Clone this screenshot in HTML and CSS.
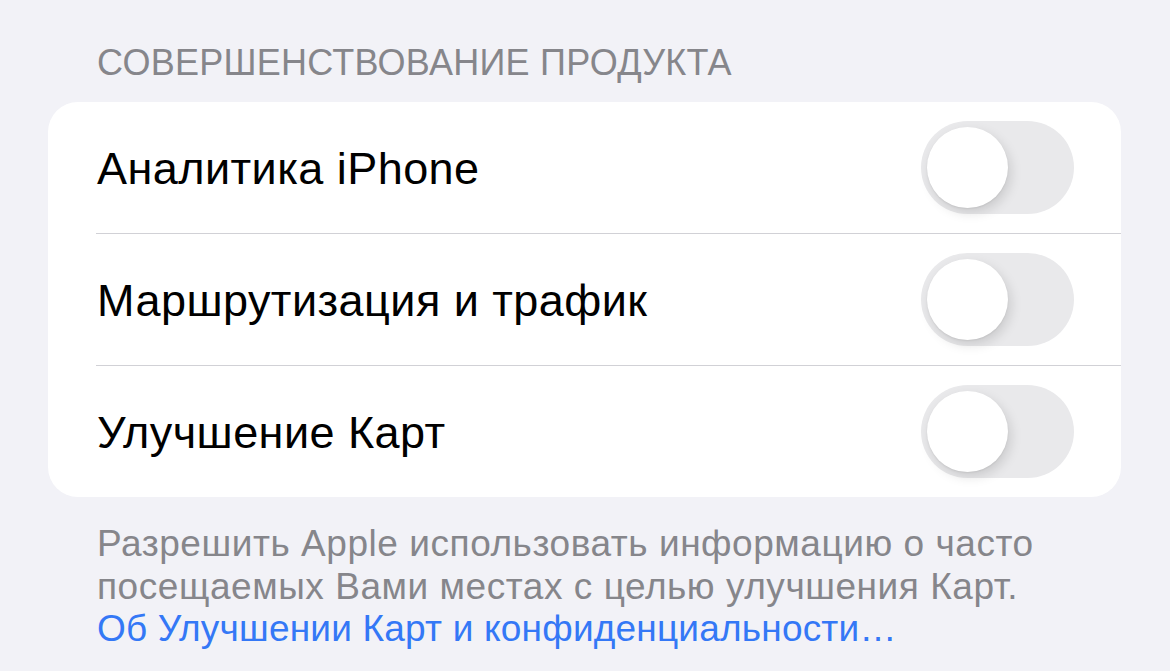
FILE: index.html
```html
<!DOCTYPE html>
<html lang="ru">
<head>
<meta charset="utf-8">
<title>Совершенствование продукта</title>
<link rel="stylesheet" href="styles.css">
</head>
<body>
  <section class="group">
    <h2 class="group-title">Совершенствование продукта</h2>
    <div class="card">
      <div class="row">
        <span class="row-label">Аналитика iPhone</span>
        <span class="switch" role="switch" aria-checked="false"><span class="knob"></span></span>
      </div>
      <div class="row">
        <span class="row-label">Маршрутизация и трафик</span>
        <span class="switch" role="switch" aria-checked="false"><span class="knob"></span></span>
      </div>
      <div class="row">
        <span class="row-label">Улучшение Карт</span>
        <span class="switch" role="switch" aria-checked="false"><span class="knob"></span></span>
      </div>
    </div>
    <p class="group-footer">
      Разрешить Apple использовать информацию о часто<br>
      посещаемых Вами местах с целью улучшения Карт.<br>
      <a class="footer-link" href="#">Об Улучшении Карт и конфиденциальности…</a>
    </p>
  </section>
</body>
</html>
```

FILE: styles.css
```css
html, body {
  margin: 0;
  padding: 0;
}

body {
  background: #f2f2f7;
  font-family: "Liberation Sans", Arial, sans-serif;
  color: #000;
  width: 1170px;
  height: 671px;
  overflow: hidden;
}

.group {
  padding: 44px 49px 0 48px;
}

.group-title {
  margin: 0 0 20px 49px;
  font-size: 36px;
  line-height: 38px;
  font-weight: 400;
  text-transform: uppercase;
  color: #86868b;
  letter-spacing: 0.25px;
}

.card {
  background: #fff;
  border-radius: 30px;
  overflow: hidden;
}

.row {
  display: flex;
  align-items: center;
  justify-content: space-between;
  height: 131px;
  margin-left: 48px;
  padding-right: 47px;
  border-bottom: 1px solid #d1d1d6;
}

.row:last-child {
  border-bottom: none;
}

.row-label {
  font-size: 45px;
  letter-spacing: 0.45px;
  padding-left: 1px;
  padding-top: 3px;
}

.switch {
  position: relative;
  flex: none;
  width: 153px;
  height: 93px;
  border-radius: 47px;
  background: #e9e9eb;
}

.knob {
  position: absolute;
  left: 6px;
  top: 6px;
  width: 81px;
  height: 81px;
  border-radius: 50%;
  background: #fff;
  box-shadow: 3px 5px 12px rgba(0, 0, 0, 0.13), 0 1px 2px rgba(0, 0, 0, 0.07);
}

.group-footer {
  margin: 26px 0 0 49px;
  font-size: 37px;
  line-height: 42.5px;
  color: #86868b;
  letter-spacing: 0.55px;
}

.footer-link {
  color: #3478f6;
  text-decoration: none;
  letter-spacing: 0.2px;
}
```
